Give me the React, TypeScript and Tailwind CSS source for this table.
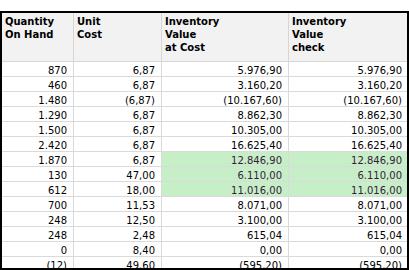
import React from "react";

type Row = {
  qty: string;
  cost: string;
  value: string;
  check: string;
  good?: boolean;
};

const rows: Row[] = [
  { qty: "870", cost: "6,87", value: "5.976,90", check: "5.976,90" },
  { qty: "460", cost: "6,87", value: "3.160,20", check: "3.160,20" },
  { qty: "1.480", cost: "(6,87)", value: "(10.167,60)", check: "(10.167,60)" },
  { qty: "1.290", cost: "6,87", value: "8.862,30", check: "8.862,30" },
  { qty: "1.500", cost: "6,87", value: "10.305,00", check: "10.305,00" },
  { qty: "2.420", cost: "6,87", value: "16.625,40", check: "16.625,40" },
  { qty: "1.870", cost: "6,87", value: "12.846,90", check: "12.846,90", good: true },
  { qty: "130", cost: "47,00", value: "6.110,00", check: "6.110,00", good: true },
  { qty: "612", cost: "18,00", value: "11.016,00", check: "11.016,00", good: true },
  { qty: "700", cost: "11,53", value: "8.071,00", check: "8.071,00" },
  { qty: "248", cost: "12,50", value: "3.100,00", check: "3.100,00" },
  { qty: "248", cost: "2,48", value: "615,04", check: "615,04" },
  { qty: "0", cost: "8,40", value: "0,00", check: "0,00" },
  { qty: "(12)", cost: "49,60", value: "(595,20)", check: "(595,20)" },
];

const headers = [
  ["Quantity", "On Hand"],
  ["Unit", "Cost"],
  ["Inventory", "Value", "at Cost"],
  ["Inventory", "Value", "check"],
];

const App = () => {
  return (
    <div className="w-[409px] h-[270px] bg-white overflow-hidden pt-[11px] font-['DejaVu_Sans',sans-serif] text-[10px] text-black">
      <div className="h-[259px] border-2 border-black overflow-hidden">
        <div className="grid grid-cols-[72px_88px_127px_118px]">
          {headers.map((lines, i) => (
            <div
              key={i}
              className={`h-[49px] bg-[#f2f2f2] border-b border-[#d6d6d6] pl-[3px] pt-[2px] font-bold leading-[13px] ${
                i < 3 ? "border-r" : ""
              }`}
            >
              {lines.map((l) => (
                <div key={l}>{l}</div>
              ))}
            </div>
          ))}
          {rows.map((r, idx) => (
            <React.Fragment key={idx}>
              <div className="h-[15px] border-b border-r border-[#dadada] text-right pr-[6px] pt-[2px] leading-[13px] overflow-hidden">
                {r.qty}
              </div>
              <div className="h-[15px] border-b border-r border-[#dadada] text-right pr-[6px] pt-[2px] leading-[13px] overflow-hidden">
                {r.cost}
              </div>
              <div
                className={`h-[15px] border-b border-r border-[#dadada] text-right pr-[6px] pt-[2px] leading-[13px] overflow-hidden ${
                  r.good ? "bg-[#c6efc8] text-[#3a1a3a]" : ""
                }`}
              >
                {r.value}
              </div>
              <div
                className={`h-[15px] border-b border-[#dadada] text-right pr-[5px] pt-[2px] leading-[13px] overflow-hidden ${
                  r.good ? "bg-[#c6efc8] text-[#3a1a3a]" : ""
                }`}
              >
                {r.check}
              </div>
            </React.Fragment>
          ))}
        </div>
      </div>
    </div>
  );
};

export default App;
